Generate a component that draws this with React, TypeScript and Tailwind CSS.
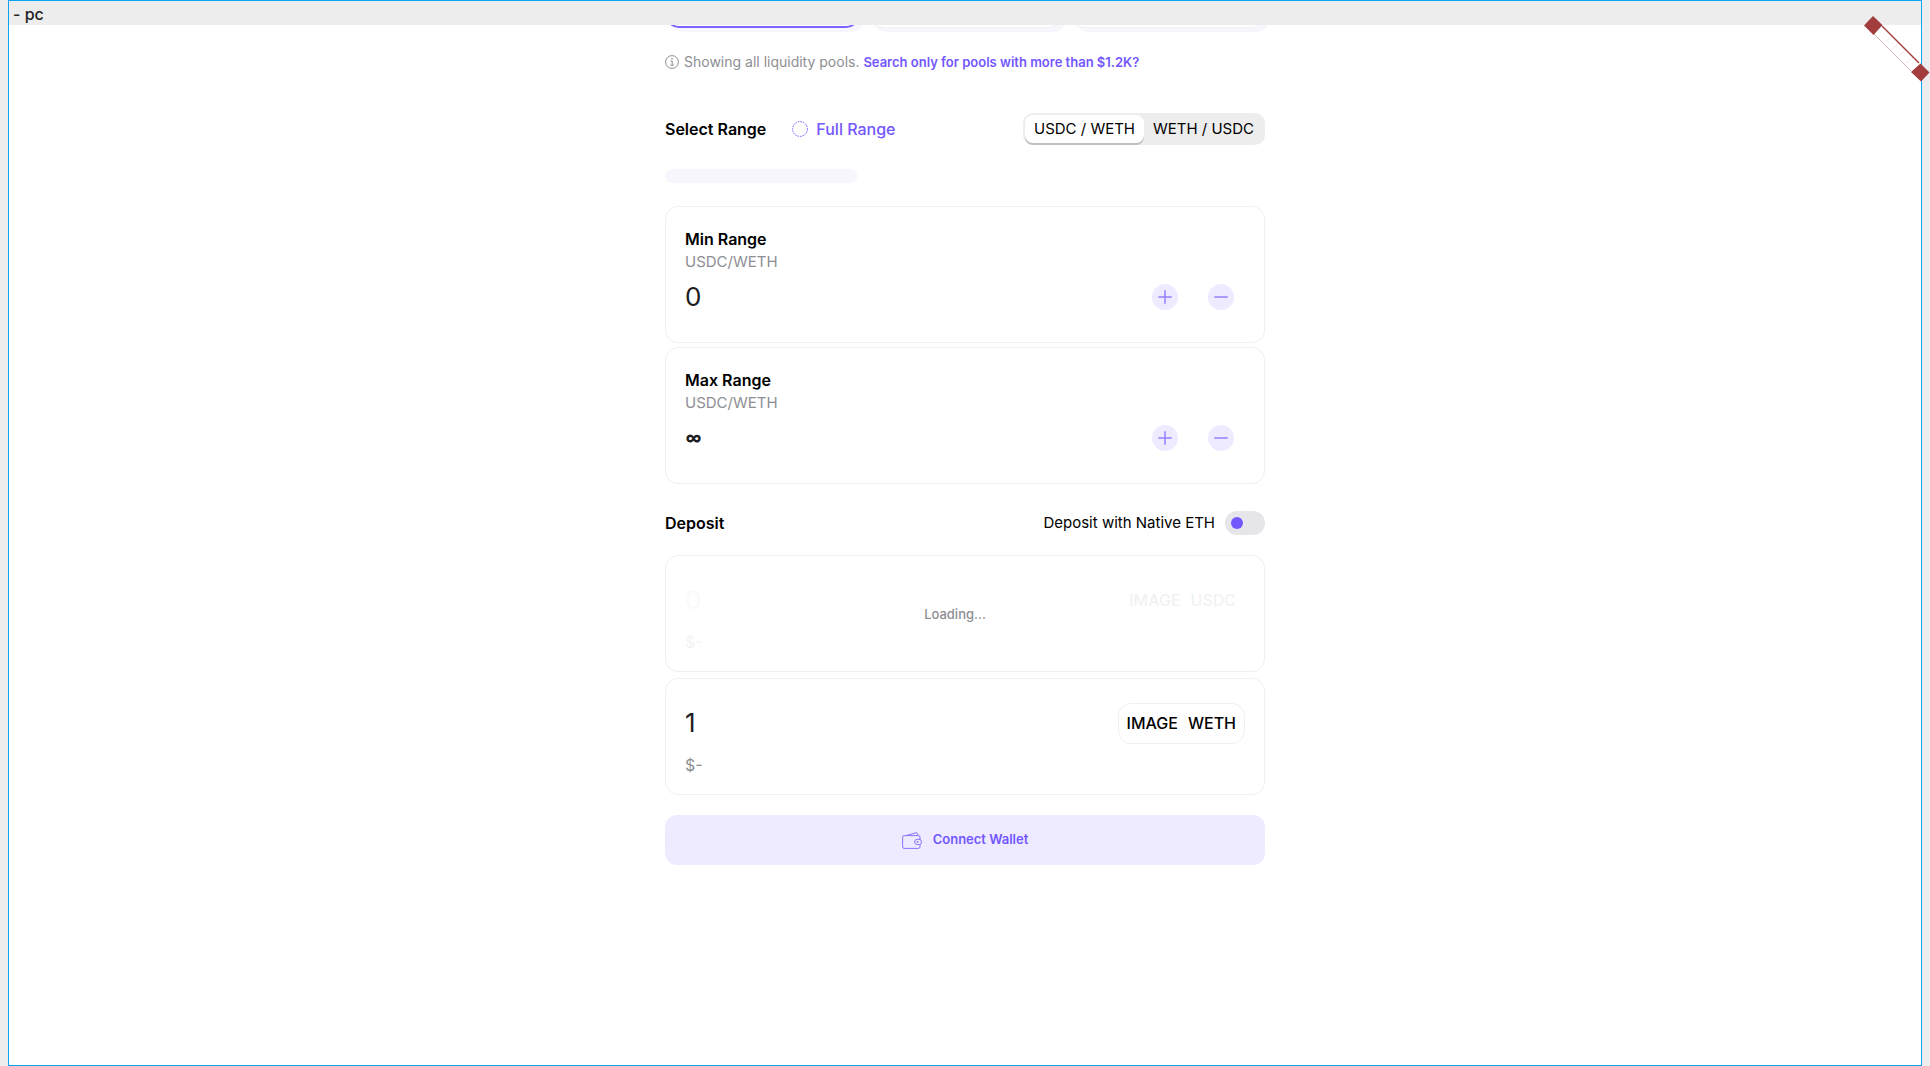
import { useState, type ReactNode } from "react";

const poolTiers = ["Low fee tier", "Medium fee tier", "High fee tier"];

function InfoIcon() {
  return (
    <svg viewBox="0 0 14 14" className="size-[14px] shrink-0" fill="none" stroke="#8e8e93" aria-hidden="true">
      <circle cx="7" cy="7" r="6.4" />
      <path d="M5.6 6h1.6v4.2M5.4 10.2h3.4" />
      <circle cx="7" cy="3.8" r="0.4" fill="#8e8e93" />
    </svg>
  );
}

function WalletIcon() {
  return (
    <svg viewBox="0 0 20 17" className="h-[17px] w-5 shrink-0" fill="none" stroke="#8b73ff" strokeLinejoin="round" strokeLinecap="round" aria-hidden="true">
      <path d="M18 7.3V5.2a1.6 1.6 0 0 0-1.600-1.600H2.2A1.600 1.600 0 0 0 .6 5.2v9.6a1.600 1.600 0 0 0 1.600 1.600h14.2a1.600 1.600 0 0 0 1.600-1.600v-2.3" />
      <path d="M4 3.600 14 .8q1.400-.3 1.600.9l.4 1.800" />
      <path d="M17.500 7.300h-2.300a2.600 2.600 0 0 0 0 5.200h2.300q2 0 2-2.600t-2-2.600z" />
      <circle cx="15.400" cy="9.900" r="0.500" />
    </svg>
  );
}

function MeasureTape() {
  return (
    <svg viewBox="0 0 66 66" className="pointer-events-none absolute top-4 right-0 size-[66px]" aria-hidden="true">
      <path d="M19 13 55 49 47 55 11 19z" fill="#fff" />
      <path d="M28 20 21 26M35 27 28 33M42 34 35 40M49 41 42 47" stroke="#f3eaea" strokeWidth="1" />
      <path d="M18 10 55 47" stroke="#a33c3c" strokeWidth="1.4" />
      <path d="M10 18 47 55" stroke="#d5b5b5" strokeWidth="1" />
      <path d="M9 0 18.500 9 9.500 19 0 9.500z" fill="#a33c3c" />
      <path d="M56.500 47.500 65.500 56.500 57 65.500 47 56z" fill="#a33c3c" />
    </svg>
  );
}

function RoundButton({ label, children }: { label: string; children: ReactNode }) {
  return (
    <button type="button" aria-label={label} className="flex size-[26px] items-center justify-center rounded-full bg-[#eeeaff]">
      <svg viewBox="0 0 14 14" className="size-[14px]" stroke="#9580ff" strokeWidth="1.5" strokeLinecap="round" aria-hidden="true">
        {children}
      </svg>
    </button>
  );
}

function RangeCard({ id, title, initial }: { id: string; title: string; initial: string }) {
  const [value, setValue] = useState(initial);
  return (
    <section className="h-[137px] rounded-[13px] border border-[#f0f0f1] px-[19px] pt-5">
      <label htmlFor={id} className="block text-base leading-6 font-semibold text-black">{title}</label>
      <p className="text-[15px] leading-[22px] text-[#8e8e93]">USDC/WETH</p>
      <div className="flex h-12 items-center justify-between pr-[11px]">
        <input
          id={id}
          value={value}
          onChange={(event) => setValue(event.target.value)}
          className={
            value === "∞"
              ? "h-9 w-64 min-w-0 bg-transparent font-['Open_Sans',sans-serif] text-2xl leading-9 font-bold text-[#1c1c1e] outline-none"
              : "h-9 w-64 min-w-0 bg-transparent text-[26px] leading-9 text-[#1c1c1e] outline-none"
          }
        />
        <div className="flex gap-[30px]">
          <RoundButton label={`Increase ${title}`}><path d="M0.800 7h12.400M7 0.800v12.400" /></RoundButton>
          <RoundButton label={`Decrease ${title}`}><path d="M0.800 7h12.400" /></RoundButton>
        </div>
      </div>
    </section>
  );
}

function DepositCard({ token, initial, loading = false }: { token: string; initial: string; loading?: boolean }) {
  const [value, setValue] = useState(initial);
  return (
    <section className="relative h-[117px] rounded-[13px] border border-[#f0f0f1] px-[19px] pt-6">
      <div className="flex h-10 items-center justify-between">
        <input
          aria-label={`${token} amount`}
          value={value}
          disabled={loading}
          onChange={(event) => setValue(event.target.value)}
          className={
            loading
              ? "h-9 w-64 min-w-0 bg-transparent text-[26px] leading-9 text-[#1c1c1e] opacity-2 outline-none"
              : "h-9 w-64 min-w-0 bg-transparent text-[26px] leading-9 text-[#1c1c1e] outline-none"
          }
        />
        <button
          type="button"
          disabled={loading}
          className={
            loading
              ? "flex h-[41px] items-center gap-2.5 rounded-[13px] border border-[#f0f0f1] px-2 text-base font-medium text-black opacity-5"
              : "flex h-[41px] items-center gap-2.5 rounded-[13px] border border-[#f0f0f1] px-2 text-base font-medium text-black"
          }
        >
          <span>IMAGE</span>
          <span>{token}</span>
        </button>
      </div>
      <p className={loading ? "mt-2 text-base leading-7 text-[#8e8e93] opacity-10" : "mt-2 text-base leading-7 text-[#8e8e93]"}>$-</p>
      {loading && (
        <p role="status" className="absolute inset-0 flex items-center justify-center pt-0.5 pr-5 text-[13px] font-medium text-[#8e8e93]">Loading...</p>
      )}
    </section>
  );
}

export default function App() {
  const [pair, setPair] = useState(0);
  const [native, setNative] = useState(false);
  return (
    <div className="relative min-h-screen bg-[#ededed] px-2 font-[Inter,sans-serif]">
      <div className="flex min-h-screen flex-col border border-[#0aa5f2] bg-white">
        <header className="h-6 bg-[#ededed] pl-1 text-base leading-[26px] font-medium text-[#222]">- pc</header>
        <main className="flex-1 overflow-hidden">
          <div className="mx-auto w-full max-w-[600px]">
            <div className="-mt-[45px] grid grid-cols-3 gap-2">
              {poolTiers.map((tier, index) => (
                <button
                  key={tier}
                  type="button"
                  aria-label={tier}
                  className={
                    index === 0
                      ? "h-12 rounded-[14px] border-2 border-[#7b61ff] bg-white shadow-[5px_4px_0_#f7f6fd]"
                      : "h-12 rounded-[14px] border border-[#f1f0f7] bg-white shadow-[5px_4px_0_#f7f6fd]"
                  }
                />
              ))}
            </div>

            <div className="mt-6 flex h-5 items-center gap-[5px] text-[13px] font-semibold whitespace-nowrap text-[#7357ff]">
              <InfoIcon />
              <p>
                <span className="text-sm font-normal text-[#8e8e93]">Showing all liquidity pools. </span>
                <a href="#pools">Search only for pools with more than $1.2K?</a>
              </p>
            </div>

            <div className="mt-[41px] flex h-8 items-center justify-between">
              <div className="flex items-center gap-[26px]">
                <h2 className="text-base font-semibold text-black">Select Range</h2>
                <button type="button" className="flex items-center gap-2 text-base font-medium text-[#7357ff]">
                  <svg viewBox="0 0 16 16" className="size-4" fill="none" stroke="#7357ff" aria-hidden="true">
                    <circle cx="8" cy="8" r="7.400" strokeDasharray="1.500 1" />
                  </svg>
                  Full Range
                </button>
              </div>
              <div className="flex h-8 rounded-[10px] bg-[#ededee] p-0.5 text-[15px] text-black">
                {["USDC / WETH", "WETH / USDC"].map((name, index) => (
                  <button
                    key={name}
                    type="button"
                    aria-pressed={pair === index}
                    onClick={() => setPair(index)}
                    className={pair === index ? "h-7 w-[119px] rounded-lg bg-white shadow-[0_2px_0_#bfbfc1]" : "h-7 w-[119px] rounded-lg"}
                  >
                    {name}
                  </button>
                ))}
              </div>
            </div>

            <div className="mt-6 h-[14px] w-48 rounded-md bg-[#f7f6fd]" />

            <div className="mt-[23px] flex flex-col gap-1">
              <RangeCard id="min-range" title="Min Range" initial="0" />
              <RangeCard id="max-range" title="Max Range" initial="∞" />
            </div>

            <div className="mt-[27px] flex h-6 items-center justify-between">
              <h2 className="text-base font-semibold text-black">Deposit</h2>
              <label className="flex items-center gap-2.5 text-[15px] text-black">
                Deposit with Native ETH
                <input
                  type="checkbox"
                  role="switch"
                  checked={native}
                  onChange={(event) => setNative(event.target.checked)}
                  className="h-6 w-10 appearance-none rounded-full bg-[#e5e5ea] p-1.5 before:block before:size-3 before:rounded-full before:bg-[#7357ff] checked:before:ml-4"
                />
              </label>
            </div>

            <div className="mt-5 flex flex-col gap-1.5">
              <DepositCard token="USDC" initial="0" loading />
              <DepositCard token="WETH" initial="1" />
            </div>

            <button type="button" className="mt-5 flex h-[50px] w-full items-center justify-center gap-[11px] rounded-xl bg-[#eeeaff] text-[13px] font-semibold text-[#7357ff]">
              <WalletIcon />
              Connect Wallet
            </button>
          </div>
        </main>
      </div>
      <MeasureTape />
    </div>
  );
}
